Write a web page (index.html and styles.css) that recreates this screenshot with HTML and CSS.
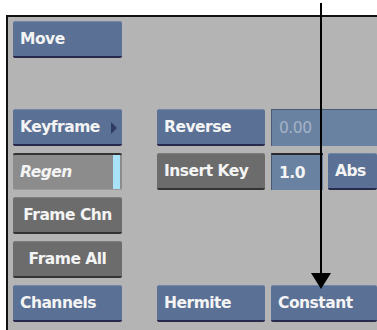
FILE: index.html
```html
<!DOCTYPE html>
<html lang="en">
<head>
    <meta charset="UTF-8">
    <meta name="viewport" content="width=device-width, initial-scale=1.0">
    <title>Keyframe Menu</title>
    <link rel="stylesheet" href="styles.css">
</head>
<body>
    <div class="frame">
        <div class="grid">
            <div class="btn blue c1 r1">Move</div>

            <div class="btn blue c1 r3 has-arrow">Keyframe<span class="tri"></span></div>
            <div class="btn blue c2 r3">Reverse</div>
            <div class="field dim c34 r3">0.00</div>

            <div class="btn regen c1 r4">Regen<span class="light"></span></div>
            <div class="btn gray c2 r4">Insert Key</div>
            <div class="field c3 r4">1.0</div>
            <div class="btn blue c4 r4">Abs</div>

            <div class="btn gray center c1 r5">Frame Chn</div>
            <div class="btn gray center c1 r6">Frame All</div>

            <div class="btn blue c1 r7">Channels</div>
            <div class="btn blue c2 r7">Hermite</div>
            <div class="btn blue c34 r7">Constant</div>
        </div>
    </div>

    <!-- callout arrow -->
    <div class="pointer">
        <div class="shaft"></div>
        <div class="head"></div>
    </div>
</body>
</html>
```

FILE: styles.css
```css
body {
    margin: 0;
    padding: 0;
    background-color: #ffffff;
    font-family: "DejaVu Sans", Verdana, sans-serif;
    overflow: hidden;
    width: 377px;
    height: 330px;
    position: relative;
}

.frame {
    margin: 15px 0 0 6px;
    width: 371px;
    height: 315px;
    background-color: #b4b4b4;
    border-left: 2px solid #111;
    border-top: 2px solid #111;
    padding: 4px 0 0 5px;
    box-sizing: border-box;
}

.grid {
    display: grid;
    grid-template-columns: 109px 23px 108px 52px 1fr;
    grid-template-rows: repeat(7, 37px);
    column-gap: 6px;
    row-gap: 7px;
}

.c1 { grid-column: 1; }
.c2 { grid-column: 3; }
.c3 { grid-column: 4; }
.c4 { grid-column: 5; margin-left: -1px; }
.c34 { grid-column: 4 / 6; }

.r1 { grid-row: 1; }
.r3 { grid-row: 3; }
.r4 { grid-row: 4; }
.r5 { grid-row: 5; }
.r6 { grid-row: 6; }
.r7 { grid-row: 7; }

.btn, .field {
    position: relative;
    display: flex;
    align-items: center;
    padding: 0 7px;
    font-size: 15.5px;
    font-weight: bold;
    letter-spacing: -0.5px;
    color: #f4f4f4;
    border-radius: 2px;
    box-sizing: border-box;
    white-space: nowrap;
}

.blue {
    background-color: #5a7094;
    border-top: 1px solid #7186a8;
    border-bottom: 2px solid #262a4c;
}

.gray {
    background-color: #6c6c6c;
    border-top: 1px solid #7e7e7e;
    border-bottom: 2px solid #333333;
}

.center {
    justify-content: center;
}

.regen {
    background-color: #8c8c8c;
    border-top: 2px solid #333333;
    border-bottom: 1px solid #9a9a9a;
    font-style: italic;
}

.regen .light {
    position: absolute;
    right: 2px;
    top: 0;
    bottom: 0;
    width: 7px;
    background-color: #a8e2f8;
}

.has-arrow .tri {
    position: absolute;
    right: 5px;
    top: 12px;
    border-left: 6px solid #2e3a66;
    border-top: 6px solid transparent;
    border-bottom: 6px solid transparent;
}

.field {
    background-color: #6a82a2;
    border-top: 2px solid #2a2a2a;
    border-left: 1px solid #4a5a70;
    border-radius: 0;
}

.field.dim {
    color: #a4b2c6;
    font-weight: normal;
    border-top: 1px solid #4a5a70;
}

.pointer {
    position: absolute;
    left: 311px;
    top: 3px;
    width: 20px;
    display: flex;
    flex-direction: column;
    align-items: center;
}

.shaft {
    width: 2px;
    height: 270px;
    background-color: #000;
}

.head {
    width: 0;
    height: 0;
    border-left: 10px solid transparent;
    border-right: 10px solid transparent;
    border-top: 16px solid #000;
}
```
